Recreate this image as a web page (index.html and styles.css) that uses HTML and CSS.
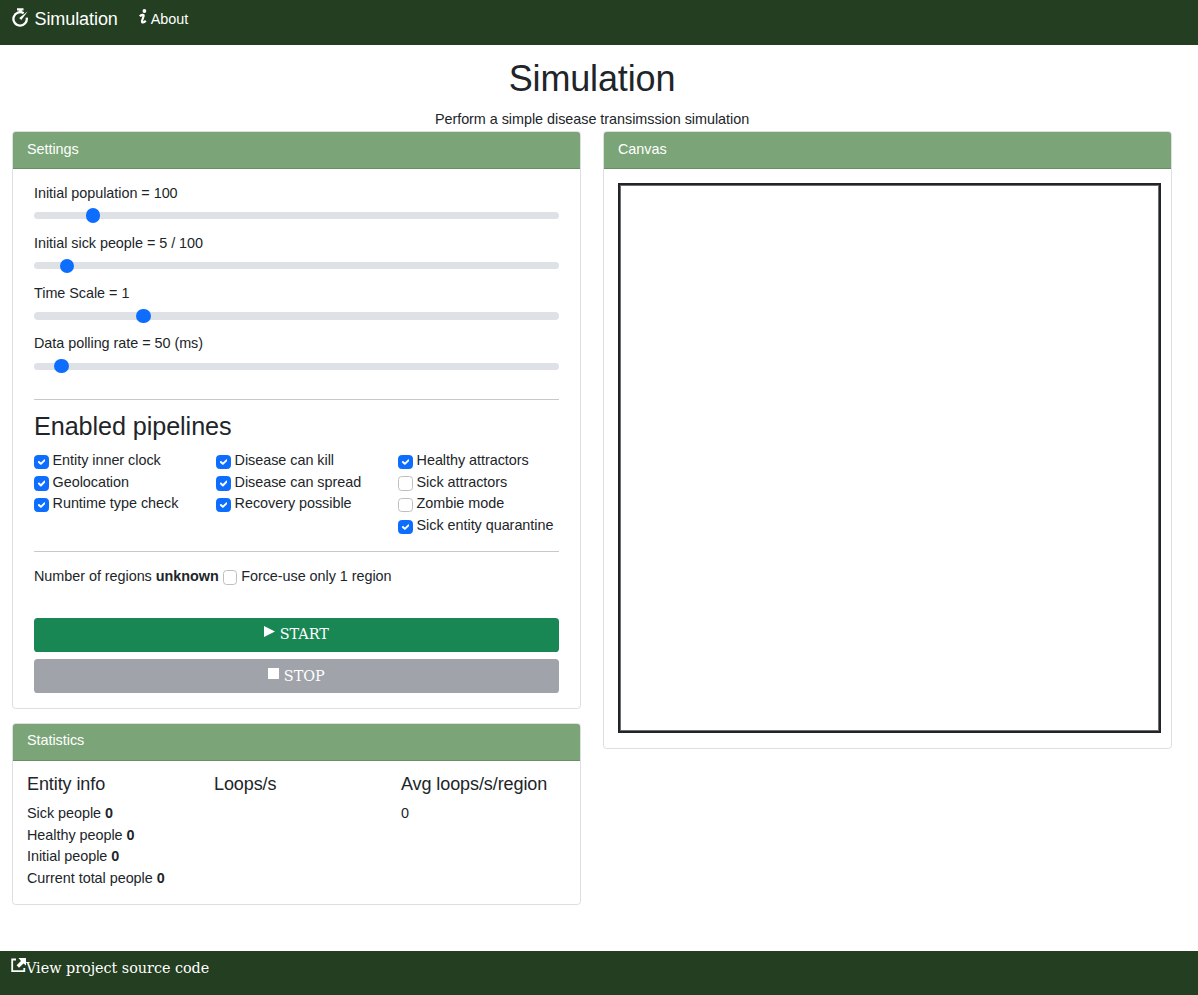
FILE: index.html
```html
<!DOCTYPE html>
<html lang="en">
<head>
<meta charset="utf-8">
<title>Simulation</title>
<link rel="stylesheet" href="styles.css">
</head>
<body>
<nav class="bar navbar">
  <a class="brand"><svg class="ico-timer" viewBox="0 0 17 19"><path d="M5 .2h6.500v2.300h-1.700v1.800h-3.100V2.500H5z" fill="#fff"/><path d="M11.700 5.200A6.700 6.700 0 1 0 14.700 9.600" fill="none" stroke="#fff" stroke-width="2.300"/><path d="M15.600 3.600L9.300 11.900 7.200 10z" fill="#fff"/></svg><span>Simulation</span></a>
  <a class="about"><svg class="ico-info" viewBox="0 0 8 16"><circle cx="5.400" cy="2" r="1.900" fill="#fff"/><path d="M.8 7.300C2.200 5.800 5 4.900 4.600 7L3.100 11.700C2.600 14.400 4.800 13.800 6.800 11.700" fill="none" stroke="#fff" stroke-width="2.200"/></svg><span>About</span></a>
</nav>
<main class="page">
  <h1 class="title">Simulation</h1>
  <p class="lead">Perform a simple disease transimssion simulation</p>
  <div class="columns">
    <div class="column">
      <section class="card">
        <header class="card-head">Settings</header>
        <div class="card-body settings">
          <label class="field">Initial population = 100<input class="range" type="range" min="0" max="1000" value="101"></label>
          <label class="field">Initial sick people = 5 / 100<input class="range" type="range" min="0" max="1000" value="50"></label>
          <label class="field">Time Scale = 1<input class="range" type="range" min="0" max="1000" value="200"></label>
          <label class="field">Data polling rate = 50 (ms)<input class="range" type="range" min="0" max="1000" value="40"></label>
          <hr class="rule">
          <h3 class="subtitle">Enabled pipelines</h3>
          <div class="pipelines">
            <div>
              <label class="option"><input class="check" type="checkbox" checked> Entity inner clock</label>
              <label class="option"><input class="check" type="checkbox" checked> Geolocation</label>
              <label class="option"><input class="check" type="checkbox" checked> Runtime type check</label>
            </div>
            <div>
              <label class="option"><input class="check" type="checkbox" checked> Disease can kill</label>
              <label class="option"><input class="check" type="checkbox" checked> Disease can spread</label>
              <label class="option"><input class="check" type="checkbox" checked> Recovery possible</label>
            </div>
            <div>
              <label class="option"><input class="check" type="checkbox" checked> Healthy attractors</label>
              <label class="option"><input class="check" type="checkbox"> Sick attractors</label>
              <label class="option"><input class="check" type="checkbox"> Zombie mode</label>
              <label class="option"><input class="check" type="checkbox" checked> Sick entity quarantine</label>
            </div>
          </div>
          <hr class="rule">
          <div class="regions">Number of regions <b>unknown</b> <label><input class="check" type="checkbox"> Force-use only 1 region</label></div>
          <button class="btn start"><svg class="ico-play" viewBox="0 0 11 11"><path d="M0 0L11 5.500 0 11z" fill="#fff"/></svg><span>START</span></button>
          <button class="btn stop"><svg class="ico-stop" viewBox="0 0 11 11"><path d="M0 0h11v11H0z" fill="#fff"/></svg><span>STOP</span></button>
        </div>
      </section>
      <section class="card">
        <header class="card-head stats-head">Statistics</header>
        <div class="card-body stats">
          <div><h5 class="stat-title">Entity info</h5>
            <div>Sick people <b>0</b></div><div>Healthy people <b>0</b></div><div>Initial people <b>0</b></div><div>Current total people <b>0</b></div></div>
          <div><h5 class="stat-title">Loops/s</h5></div>
          <div><h5 class="stat-title">Avg loops/s/region</h5><div>0</div></div>
        </div>
      </section>
    </div>
    <div class="column">
      <section class="card">
        <header class="card-head">Canvas</header>
        <div class="card-body canvas-body"><canvas class="canvas"></canvas></div>
      </section>
    </div>
  </div>
</main>
<footer class="bar footer"><a class="source"><svg class="ico-link" viewBox="0 0 15 15"><path d="M5 1.500H1.200V13.200H13.300V10" fill="none" stroke="#fff" stroke-width="1.800"/><path d="M7.500 0H15V7.500L12.500 5.400 8 9.700 5.600 7.300 10 3z" fill="#fff"/></svg><span>View project source code</span></a></footer>
</body>
</html>
```
FILE: styles.css
```css
*{box-sizing:border-box}
body{margin:0;height:995px;display:flex;flex-direction:column;overflow:hidden;background:#fff;color:#212529;font:14.4px/21.6px "Liberation Sans",Arial,sans-serif;letter-spacing:-.035px}
h1,h3,h5,p{margin:0;font-weight:400}
.bar{background:#233e20;color:#fff;flex:none;display:flex}
.navbar{height:45px;padding:6px 11px;align-items:flex-start}
.brand{display:flex;font-size:18px;line-height:27px;letter-spacing:-.08px}
.ico-timer{width:17px;height:19px;margin:2px 6px 0 .5px}
.about{display:flex;margin:3px 0 0 21px}
.ico-info{width:8px;height:16px;margin:0 4px 0 0}
.page{flex:1;width:1184px}
.title{font-size:36px;line-height:43.200px;padding-top:12px;text-align:center;letter-spacing:-.15px}
.lead{text-align:center;padding-top:9px;height:31.200px}
.columns{display:flex;gap:22px;padding-left:12px}
.column{width:569px}
.card{border:1px solid #dedede;border-radius:3.600px;margin-bottom:14.400px;overflow:hidden}
.card-head{height:37px;padding:7px 14px;background:#7ba578;color:#fff;border-bottom:1px solid #6a8f67}
.stats-head{padding-top:6px}
.card-body{padding:14.400px 14px}
.settings{padding:13.300px 21px 14.500px}
.field{display:block;height:50.200px}
.range{appearance:none;display:block;width:100%;height:21.600px;margin:0.6px 0 0;background:transparent}
.range::-webkit-slider-runnable-track{height:7.200px;border-radius:14px;background:#dee2e6}
.range::-webkit-slider-thumb{appearance:none;width:14.400px;height:14.400px;margin-top:-3.600px;border-radius:50%;background:#0d6efd}
.rule{height:1px;border:0;background:#c7c8c9;margin:14.400px 0}
.field + .rule{margin-top:15.200px}
.subtitle{font-size:25.200px;line-height:30.200px;margin-bottom:9px;margin-top:-3px;letter-spacing:-.08px}
.pipelines{display:grid;grid-template-columns:182px 182px 1fr;height:86.400px}
.option{display:block;white-space:nowrap}
.check{appearance:none;width:14.600px;height:14.400px;margin:4.600px 0 0;vertical-align:top;border:1px solid #bfbfbf;border-radius:3.600px;background:#fff}
.regions .check{margin-top:4px}
.check:checked{border-color:#0d6efd;background:#0d6efd url("data:image/svg+xml,%3csvg xmlns='http://www.w3.org/2000/svg' viewBox='0 0 20 20'%3e%3cpath fill='none' stroke='white' stroke-linecap='round' stroke-linejoin='round' stroke-width='3' d='M6 10l3 3 6-6'/%3e%3c/svg%3e")}
.regions{height:51.700px}
.btn{display:flex;justify-content:center;width:100%;height:34.200px;border:0;border-radius:3.600px;color:#fff;font:14.400px/21.600px "DejaVu Serif",serif;letter-spacing:-.035px;padding:6px 0}
.start{background:#198754;margin-bottom:6.800px}
.stop{background:#a0a4aa;padding-top:7px}
.ico-play,.ico-stop{width:11px;height:11px;margin:2.300px 4.500px 0 0}
.ico-stop{margin-top:1.500px}
.stats{display:grid;grid-template-columns:187px 187px 1fr;padding-top:13px;padding-bottom:14.800px}
.stat-title{font-size:18px;line-height:21.600px;margin-bottom:7.200px;letter-spacing:-.09px}
.canvas-body{padding-top:14px;padding-bottom:15px}
.canvas{display:block;width:543px;height:550px;border:2.700px solid #212529;outline:1px solid #6b6e72;outline-offset:-3px}
.footer{height:44px;padding:7px 11px 0}
.source{display:flex;font:14.400px/21.600px "DejaVu Serif",serif}
.ico-link{width:15px;height:15px}
```
